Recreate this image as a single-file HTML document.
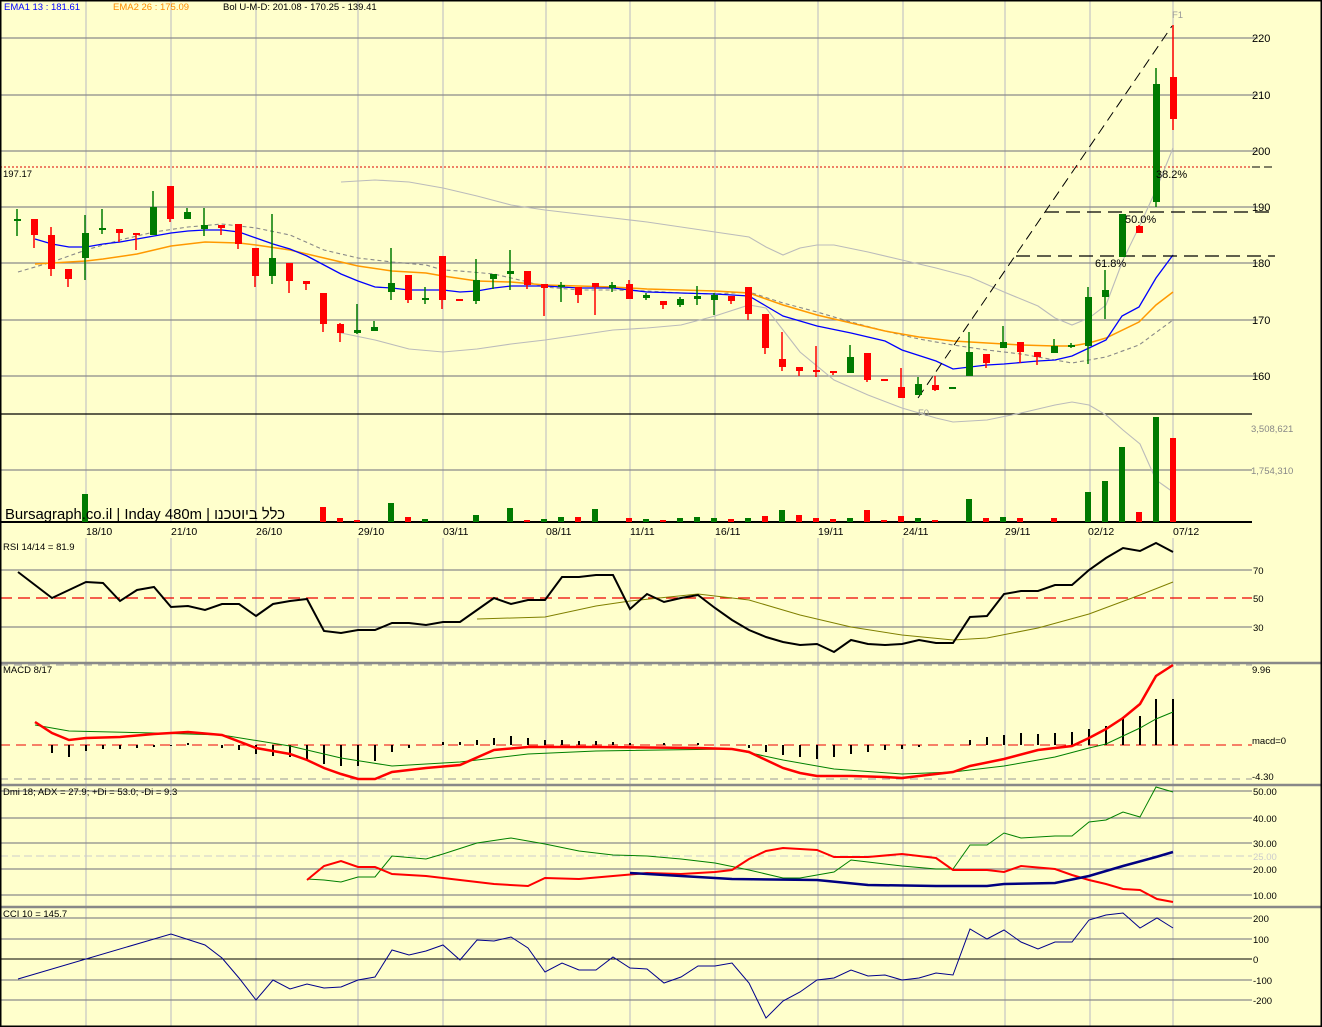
<!DOCTYPE html>
<html><head><meta charset="utf-8"><style>
html,body{margin:0;padding:0;background:#ffffcc;}
svg{display:block;font-family:"Liberation Sans","Noto Sans CJK JP",sans-serif;}
</style></head><body>
<svg width="1322" height="1027" viewBox="0 0 1322 1027" xmlns="http://www.w3.org/2000/svg">
<rect x="0" y="0" width="1322" height="1027" fill="#ffffcc"/>
<!-- vertical grid -->
<g stroke="#c4c4c4" stroke-width="1.2">
<line x1="86" y1="0" x2="86" y2="1027"/><line x1="171" y1="0" x2="171" y2="1027"/><line x1="256" y1="0" x2="256" y2="1027"/><line x1="358" y1="0" x2="358" y2="1027"/><line x1="443" y1="0" x2="443" y2="1027"/><line x1="546" y1="0" x2="546" y2="1027"/><line x1="630" y1="0" x2="630" y2="1027"/><line x1="715" y1="0" x2="715" y2="1027"/><line x1="818" y1="0" x2="818" y2="1027"/><line x1="903" y1="0" x2="903" y2="1027"/><line x1="1005" y1="0" x2="1005" y2="1027"/><line x1="1090" y1="0" x2="1090" y2="1027"/><line x1="1173" y1="0" x2="1173" y2="1027"/>
</g>
<!-- horizontal grid -->
<g stroke="#8a8a8a" stroke-width="1.2">
<line x1="0" y1="38" x2="1258" y2="38"/><line x1="0" y1="95" x2="1258" y2="95"/><line x1="0" y1="151" x2="1258" y2="151"/><line x1="0" y1="207" x2="1258" y2="207"/><line x1="0" y1="263" x2="1258" y2="263"/><line x1="0" y1="320" x2="1258" y2="320"/><line x1="0" y1="376" x2="1258" y2="376"/>
<line x1="0" y1="470" x2="1252" y2="470"/>
<line x1="0" y1="570" x2="1252" y2="570"/><line x1="0" y1="627" x2="1252" y2="627"/>
<line x1="0" y1="791" x2="1252" y2="791"/><line x1="0" y1="818" x2="1252" y2="818"/><line x1="0" y1="843" x2="1252" y2="843"/><line x1="0" y1="869" x2="1252" y2="869"/><line x1="0" y1="895" x2="1252" y2="895"/>
<line x1="0" y1="918" x2="1252" y2="918"/><line x1="0" y1="939" x2="1252" y2="939"/><line x1="0" y1="980" x2="1252" y2="980"/><line x1="0" y1="1000" x2="1252" y2="1000"/>
</g>
<line x1="0" y1="856" x2="1252" y2="856" stroke="#ccc" stroke-dasharray="8,4"/>
<line x1="0" y1="959" x2="1252" y2="959" stroke="#000" stroke-width="1"/>
<!-- panel separators -->
<line x1="0" y1="414" x2="1252" y2="414" stroke="#000" stroke-width="1.3"/>
<line x1="0" y1="522" x2="1252" y2="522" stroke="#000" stroke-width="2"/>
<rect x="0" y="523" width="1322" height="15" fill="#ffffcc"/>
<line x1="0" y1="663" x2="1322" y2="663" stroke="#888" stroke-width="2.5"/>
<line x1="0" y1="785" x2="1322" y2="785" stroke="#888" stroke-width="2.5"/>
<line x1="0" y1="907" x2="1322" y2="907" stroke="#888" stroke-width="2.5"/>
<line x1="0" y1="665" x2="1252" y2="665" stroke="#999" stroke-dasharray="8,6"/>
<line x1="0" y1="779" x2="1252" y2="779" stroke="#999" stroke-dasharray="8,6"/>
<line x1="0" y1="745" x2="1252" y2="745" stroke="#e00" stroke-dasharray="10,6"/>
<line x1="0" y1="598" x2="1252" y2="598" stroke="#e00" stroke-width="1.3" stroke-dasharray="12,6"/>
<line x1="0" y1="167" x2="1252" y2="167" stroke="#d00" stroke-dasharray="2,2"/>
<line x1="1252" y1="167" x2="1275" y2="167" stroke="#000" stroke-dasharray="8,4"/>
<!-- bollinger -->
<g fill="none" stroke-width="1.1">
<polyline stroke="#bbb" points="341,182 375,180 409,182 443,188 477,196 511,205 545,210 579,214 613,218 647,222 681,227 715,232 749,237 766,247 783,255 800,248 817,245 834,245 868,252 902,260 936,268 970,277 1004,292 1038,306 1055,318 1072,325 1089,318 1106,305 1123,260 1140,225 1156,190 1173,148"/>
<polyline stroke="#bbb" points="341,333 375,340 409,349 443,352 477,349 511,344 545,340 579,335 613,330 647,328 681,325 715,316 749,305 766,308 783,330 800,352 834,380 868,395 902,408 936,418 953,422 987,420 1021,413 1055,405 1072,402 1089,405 1106,415 1123,430 1140,444 1156,480 1173,492"/>
<polyline stroke="#888" stroke-dasharray="4,3" points="18,272 52,262 86,250 120,240 154,232 188,227 222,224 256,228 290,235 324,250 358,258 392,262 426,265 443,270 460,271 494,274 528,282 545,287 579,290 613,290 647,291 681,293 715,294 749,292 783,303 817,312 851,322 885,331 919,339 953,345 987,350 1021,354 1055,360 1072,363 1106,357 1139,345 1173,320"/>
<polyline stroke="#f90" stroke-width="1.5" points="35,264 69,262 86,261 103,259 137,254 171,246 205,242 239,243 256,245 290,250 324,258 358,266 392,271 426,273 443,276 477,281 511,282 545,285 579,286 613,287 647,289 681,290 715,291 749,293 783,305 817,315 851,323 885,331 919,337 953,341 987,343 1021,345 1055,346 1072,346 1089,343 1106,338 1139,322 1156,305 1173,292"/>
<polyline stroke="#00f" stroke-width="1.3" points="35,239 52,244 69,247 86,247 103,244 120,242 137,239 154,236 171,233 188,231 205,230 222,230 239,232 256,238 273,244 290,249 307,256 324,265 341,274 358,281 375,287 392,288 409,290 426,290 443,290 460,292 477,291 494,288 511,286 528,286 545,286 579,288 613,288 647,292 681,293 715,294 749,296 766,306 783,316 800,321 817,326 851,333 885,341 902,350 936,361 953,369 987,365 1004,364 1038,361 1055,360 1072,356 1089,348 1106,340 1122,316 1139,307 1156,278 1173,255"/>
</g>
<!-- fib -->
<line x1="918" y1="398" x2="1172" y2="26" stroke="#000" stroke-dasharray="10,6"/>
<line x1="1045" y1="212" x2="1275" y2="212" stroke="#000" stroke-width="1.3" stroke-dasharray="14,7"/>
<line x1="1016" y1="256" x2="1275" y2="256" stroke="#000" stroke-width="1.3" stroke-dasharray="14,7"/>
<!-- candles: wicks -->
<g stroke-width="1.5">
<g stroke="#007a00">
<line x1="17" y1="209" x2="17" y2="236"/><line x1="85" y1="215" x2="85" y2="280"/><line x1="102" y1="209" x2="102" y2="234"/><line x1="153" y1="191" x2="153" y2="235"/><line x1="187" y1="208" x2="187" y2="219"/><line x1="204" y1="208" x2="204" y2="236"/><line x1="272" y1="214" x2="272" y2="284"/><line x1="357" y1="304" x2="357" y2="334"/><line x1="374" y1="321" x2="374" y2="331"/><line x1="391" y1="248" x2="391" y2="300"/><line x1="425" y1="287" x2="425" y2="304"/><line x1="476" y1="259" x2="476" y2="304"/><line x1="493" y1="274" x2="493" y2="289"/><line x1="510" y1="250" x2="510" y2="290"/><line x1="561" y1="282" x2="561" y2="302"/><line x1="612" y1="282" x2="612" y2="292"/><line x1="646" y1="293" x2="646" y2="300"/><line x1="680" y1="297" x2="680" y2="307"/><line x1="697" y1="286" x2="697" y2="305"/><line x1="714" y1="293" x2="714" y2="315"/><line x1="850" y1="345" x2="850" y2="373"/><line x1="918" y1="377" x2="918" y2="395"/><line x1="969" y1="332" x2="969" y2="376"/><line x1="1003" y1="326" x2="1003" y2="348"/><line x1="1054" y1="339" x2="1054" y2="353"/><line x1="1071" y1="343" x2="1071" y2="348"/><line x1="1088" y1="287" x2="1088" y2="364"/><line x1="1105" y1="270" x2="1105" y2="319"/><line x1="1156" y1="68" x2="1156" y2="207"/>
</g>
<g stroke="#f00">
<line x1="34" y1="219" x2="34" y2="248"/><line x1="51" y1="227" x2="51" y2="276"/><line x1="68" y1="269" x2="68" y2="287"/><line x1="119" y1="229" x2="119" y2="242"/><line x1="136" y1="233" x2="136" y2="250"/><line x1="170" y1="186" x2="170" y2="222"/><line x1="221" y1="225" x2="221" y2="235"/><line x1="238" y1="224" x2="238" y2="249"/><line x1="255" y1="248" x2="255" y2="287"/><line x1="289" y1="263" x2="289" y2="293"/><line x1="306" y1="281" x2="306" y2="290"/><line x1="323" y1="293" x2="323" y2="332"/><line x1="340" y1="323" x2="340" y2="342"/><line x1="408" y1="275" x2="408" y2="303"/><line x1="442" y1="256" x2="442" y2="309"/><line x1="527" y1="271" x2="527" y2="289"/><line x1="544" y1="284" x2="544" y2="316"/><line x1="578" y1="287" x2="578" y2="303"/><line x1="595" y1="283" x2="595" y2="315"/><line x1="629" y1="280" x2="629" y2="299"/><line x1="663" y1="301" x2="663" y2="309"/><line x1="731" y1="296" x2="731" y2="304"/><line x1="748" y1="287" x2="748" y2="320"/><line x1="765" y1="314" x2="765" y2="354"/><line x1="782" y1="332" x2="782" y2="371"/><line x1="799" y1="367" x2="799" y2="376"/><line x1="816" y1="346" x2="816" y2="377"/><line x1="833" y1="371" x2="833" y2="375"/><line x1="867" y1="353" x2="867" y2="382"/><line x1="901" y1="368" x2="901" y2="398"/><line x1="935" y1="376" x2="935" y2="391"/><line x1="986" y1="354" x2="986" y2="368"/><line x1="1020" y1="342" x2="1020" y2="363"/><line x1="1037" y1="352" x2="1037" y2="365"/><line x1="1139" y1="225" x2="1139" y2="233"/><line x1="1173" y1="25" x2="1173" y2="130"/>
</g>
</g>
<!-- candle bodies -->
<g fill="#007a00">
<rect x="14" y="219" width="7" height="2"/><rect x="82" y="233" width="7" height="25"/><rect x="99" y="228" width="7" height="2"/><rect x="150" y="207" width="7" height="28"/><rect x="184" y="212" width="7" height="7"/><rect x="201" y="225" width="7" height="4"/><rect x="269" y="258" width="7" height="18"/><rect x="354" y="330" width="7" height="3"/><rect x="371" y="327" width="7" height="4"/><rect x="388" y="283" width="7" height="9"/><rect x="422" y="298" width="7" height="2"/><rect x="473" y="280" width="7" height="21"/><rect x="490" y="274" width="7" height="5"/><rect x="507" y="271" width="7" height="3"/><rect x="558" y="285" width="7" height="2"/><rect x="609" y="285" width="7" height="3"/><rect x="643" y="295" width="7" height="3"/><rect x="677" y="299" width="7" height="6"/><rect x="694" y="296" width="7" height="3"/><rect x="711" y="295" width="7" height="5"/><rect x="847" y="357" width="7" height="16"/><rect x="915" y="384" width="7" height="11"/><rect x="949" y="387" width="7" height="2"/><rect x="966" y="352" width="7" height="24"/><rect x="1000" y="342" width="7" height="6"/><rect x="1051" y="346" width="7" height="7"/><rect x="1068" y="345" width="7" height="2"/><rect x="1085" y="297" width="7" height="49"/><rect x="1102" y="290" width="7" height="7"/><rect x="1119" y="214" width="7" height="43"/><rect x="1153" y="84" width="7" height="118"/>
</g>
<g fill="#f00">
<rect x="31" y="219" width="7" height="16"/><rect x="48" y="235" width="7" height="34"/><rect x="65" y="269" width="7" height="10"/><rect x="116" y="229" width="7" height="4"/><rect x="133" y="233" width="7" height="2"/><rect x="167" y="186" width="7" height="33"/><rect x="218" y="225" width="7" height="3"/><rect x="235" y="224" width="7" height="20"/><rect x="252" y="248" width="7" height="28"/><rect x="286" y="263" width="7" height="18"/><rect x="303" y="281" width="7" height="3"/><rect x="320" y="293" width="7" height="31"/><rect x="337" y="324" width="7" height="9"/><rect x="405" y="275" width="7" height="25"/><rect x="439" y="256" width="7" height="44"/><rect x="456" y="299" width="7" height="2"/><rect x="524" y="271" width="7" height="14"/><rect x="541" y="284" width="7" height="4"/><rect x="575" y="287" width="7" height="8"/><rect x="592" y="283" width="7" height="4"/><rect x="626" y="284" width="7" height="15"/><rect x="660" y="301" width="7" height="4"/><rect x="728" y="296" width="7" height="5"/><rect x="745" y="287" width="7" height="27"/><rect x="762" y="314" width="7" height="34"/><rect x="779" y="359" width="7" height="8"/><rect x="796" y="367" width="7" height="4"/><rect x="813" y="370" width="7" height="2"/><rect x="830" y="371" width="7" height="2"/><rect x="864" y="353" width="7" height="27"/><rect x="881" y="379" width="7" height="2"/><rect x="898" y="387" width="7" height="11"/><rect x="932" y="385" width="7" height="5"/><rect x="983" y="354" width="7" height="9"/><rect x="1017" y="342" width="7" height="10"/><rect x="1034" y="352" width="7" height="5"/><rect x="1136" y="226" width="7" height="7"/><rect x="1170" y="77" width="7" height="42"/>
</g>
<!-- volume -->
<g fill="#007a00">
<rect x="82" y="494" width="6" height="28"/><rect x="388" y="503" width="6" height="19"/><rect x="422" y="519" width="6" height="3"/><rect x="473" y="515" width="6" height="7"/><rect x="507" y="508" width="6" height="14"/><rect x="541" y="519" width="6" height="3"/><rect x="558" y="517" width="6" height="5"/><rect x="592" y="509" width="6" height="13"/><rect x="643" y="519" width="6" height="3"/><rect x="677" y="518" width="6" height="4"/><rect x="694" y="517" width="6" height="5"/><rect x="711" y="518" width="6" height="4"/><rect x="745" y="518" width="6" height="4"/><rect x="779" y="510" width="6" height="12"/><rect x="847" y="518" width="6" height="4"/><rect x="915" y="518" width="6" height="4"/><rect x="966" y="499" width="6" height="23"/><rect x="1000" y="517" width="6" height="5"/><rect x="1085" y="492" width="6" height="30"/><rect x="1102" y="481" width="6" height="41"/><rect x="1119" y="447" width="6" height="75"/><rect x="1153" y="417" width="6" height="105"/>
</g>
<g fill="#f00">
<rect x="320" y="507" width="6" height="15"/><rect x="337" y="518" width="6" height="4"/><rect x="354" y="520" width="6" height="2"/><rect x="405" y="517" width="6" height="5"/><rect x="524" y="520" width="6" height="2"/><rect x="575" y="517" width="6" height="5"/><rect x="626" y="518" width="6" height="4"/><rect x="660" y="520" width="6" height="2"/><rect x="728" y="519" width="6" height="3"/><rect x="762" y="516" width="6" height="6"/><rect x="796" y="515" width="6" height="7"/><rect x="813" y="518" width="6" height="4"/><rect x="830" y="519" width="6" height="3"/><rect x="864" y="510" width="6" height="12"/><rect x="881" y="520" width="6" height="2"/><rect x="898" y="516" width="6" height="6"/><rect x="932" y="520" width="6" height="2"/><rect x="983" y="518" width="6" height="4"/><rect x="1017" y="518" width="6" height="4"/><rect x="1051" y="518" width="6" height="4"/><rect x="1136" y="512" width="6" height="10"/><rect x="1170" y="438" width="6" height="84"/>
</g>
<!-- RSI -->
<polyline fill="none" stroke="#808000" stroke-width="1" points="477,619 545,617 596,606 630,601 698,594 749,600 800,615 851,627 902,635 953,640 987,638 1038,628 1089,614 1140,595 1173,582"/>
<polyline fill="none" stroke="#000" stroke-width="2" points="18,572 35,585 52,598 69,590 86,582 103,583 120,601 137,590 154,587 171,607 188,606 205,610 222,604 239,604 256,616 273,604 290,601 307,599 324,631 341,633 358,630 375,630 392,623 409,623 426,625 443,622 460,622 477,610 494,598 511,604 528,600 545,600 562,577 579,577 596,575 613,575 630,609 647,594 664,602 681,598 698,595 715,608 732,620 749,630 766,637 783,642 800,645 817,644 834,652 851,640 868,644 885,645 902,644 919,640 936,643 953,643 970,617 987,616 1004,594 1021,591 1038,591 1055,585 1072,585 1089,570 1106,558 1123,548 1140,551 1156,543 1173,552"/>
<!-- MACD histogram -->
<g stroke="#000" stroke-width="2">
<line x1="52" y1="745" x2="52" y2="753"/><line x1="69" y1="745" x2="69" y2="757"/><line x1="86" y1="745" x2="86" y2="751"/><line x1="103" y1="745" x2="103" y2="749"/><line x1="120" y1="745" x2="120" y2="749"/><line x1="137" y1="745" x2="137" y2="748"/><line x1="154" y1="745" x2="154" y2="747"/><line x1="171" y1="745" x2="171" y2="746"/><line x1="188" y1="745" x2="188" y2="743"/><line x1="222" y1="745" x2="222" y2="748"/><line x1="239" y1="745" x2="239" y2="750"/><line x1="256" y1="745" x2="256" y2="754"/><line x1="273" y1="745" x2="273" y2="756"/><line x1="290" y1="745" x2="290" y2="757"/><line x1="307" y1="745" x2="307" y2="760"/><line x1="324" y1="745" x2="324" y2="764"/><line x1="341" y1="745" x2="341" y2="766"/><line x1="358" y1="745" x2="358" y2="766"/><line x1="375" y1="745" x2="375" y2="761"/><line x1="392" y1="745" x2="392" y2="752"/><line x1="409" y1="745" x2="409" y2="748"/><line x1="443" y1="745" x2="443" y2="742"/><line x1="460" y1="745" x2="460" y2="742"/><line x1="477" y1="745" x2="477" y2="740"/><line x1="494" y1="745" x2="494" y2="738"/><line x1="511" y1="745" x2="511" y2="736"/><line x1="528" y1="745" x2="528" y2="738"/><line x1="545" y1="745" x2="545" y2="740"/><line x1="562" y1="745" x2="562" y2="740"/><line x1="579" y1="745" x2="579" y2="741"/><line x1="596" y1="745" x2="596" y2="741"/><line x1="613" y1="745" x2="613" y2="742"/><line x1="630" y1="745" x2="630" y2="743"/><line x1="664" y1="745" x2="664" y2="743"/><line x1="698" y1="745" x2="698" y2="743"/><line x1="749" y1="745" x2="749" y2="748"/><line x1="766" y1="745" x2="766" y2="752"/><line x1="783" y1="745" x2="783" y2="755"/><line x1="800" y1="745" x2="800" y2="757"/><line x1="817" y1="745" x2="817" y2="759"/><line x1="834" y1="745" x2="834" y2="757"/><line x1="851" y1="745" x2="851" y2="754"/><line x1="868" y1="745" x2="868" y2="752"/><line x1="885" y1="745" x2="885" y2="750"/><line x1="902" y1="745" x2="902" y2="749"/><line x1="919" y1="745" x2="919" y2="747"/><line x1="970" y1="745" x2="970" y2="740"/><line x1="987" y1="745" x2="987" y2="737"/><line x1="1004" y1="745" x2="1004" y2="735"/><line x1="1021" y1="745" x2="1021" y2="733"/><line x1="1038" y1="745" x2="1038" y2="734"/><line x1="1055" y1="745" x2="1055" y2="733"/><line x1="1072" y1="745" x2="1072" y2="732"/><line x1="1089" y1="745" x2="1089" y2="729"/><line x1="1106" y1="745" x2="1106" y2="726"/><line x1="1123" y1="745" x2="1123" y2="717"/><line x1="1140" y1="745" x2="1140" y2="716"/><line x1="1156" y1="745" x2="1156" y2="699"/><line x1="1173" y1="745" x2="1173" y2="699"/>
</g>
<polyline fill="none" stroke="#008000" stroke-width="1" points="35,725 69,731 154,733 222,735 290,746 341,758 392,766 460,762 528,754 596,751 732,749 783,760 834,769 902,774 953,772 1004,766 1055,757 1089,748 1106,744 1123,736 1140,728 1156,719 1173,712"/>
<polyline fill="none" stroke="#f00" stroke-width="2.5" points="35,722 52,733 69,740 86,738 120,737 154,734 188,732 222,735 256,748 290,754 307,760 324,768 341,774 358,779 375,779 392,772 426,768 460,765 494,750 528,747 596,747 698,748 732,749 749,752 766,760 783,768 800,773 817,776 851,776 885,777 902,778 936,774 953,772 970,766 1004,759 1038,750 1072,746 1089,738 1106,729 1123,718 1140,704 1156,676 1173,665"/>
<!-- DMI -->
<polyline fill="none" stroke="#008000" stroke-width="1" points="307,879 324,880 341,882 358,877 375,877 392,856 426,859 443,854 477,843 511,838 545,844 579,851 613,855 647,856 681,859 715,863 749,870 783,878 800,878 834,872 851,860 868,862 902,866 936,869 953,869 970,845 987,845 1004,833 1021,838 1055,836 1072,836 1089,822 1106,820 1123,812 1140,817 1156,787 1173,792"/>
<polyline fill="none" stroke="#f00" stroke-width="2" points="307,880 324,866 341,861 358,867 375,867 392,874 426,876 460,880 494,884 528,886 545,878 579,879 613,876 647,873 681,874 715,872 732,870 749,859 766,851 783,848 817,850 834,857 868,857 902,854 936,858 953,870 987,870 1004,872 1021,866 1055,869 1072,875 1089,880 1106,884 1123,889 1140,890 1157,899 1173,902"/>
<polyline fill="none" stroke="#000080" stroke-width="2.5" points="630,873 681,876 732,879 817,880 868,885 936,886 987,886 1004,884 1055,883 1089,876 1123,866 1156,857 1173,852"/>
<!-- CCI -->
<polyline fill="none" stroke="#00008b" stroke-width="1" points="18,979 171,934 205,945 222,958 239,978 256,1000 273,980 290,989 307,984 324,988 341,987 358,980 375,977 392,950 409,955 426,951 443,945 460,960 477,940 494,941 511,937 528,948 545,972 562,963 579,970 596,970 613,957 630,968 647,969 664,983 681,977 698,966 715,966 732,963 749,983 766,1018 783,1001 800,992 817,980 834,978 851,970 868,976 885,975 902,980 919,978 936,973 953,975 970,929 987,939 1004,930 1021,942 1038,949 1055,942 1072,942 1089,920 1106,915 1123,913 1140,928 1157,918 1173,928"/>
<!-- borders -->
<rect x="0.75" y="0.75" width="1320.5" height="1025.5" fill="none" stroke="#000" stroke-width="1.5"/>
<!-- text -->
<g font-size="9.5">
<text x="4" y="10" fill="#0000ff">EMA1 13 : 181.61</text>
<text x="113" y="10" fill="#ff8c00">EMA2 26 : 175.09</text>
<text x="223" y="10" fill="#000">Bol U-M-D: 201.08 - 170.25 - 139.41</text>
<text x="3" y="177" fill="#000">197.17</text>
<text x="3" y="550" fill="#000">RSI 14/14 = 81.9</text>
<text x="3" y="673" fill="#000">MACD 8/17</text>
<text x="3" y="795" fill="#000">Dmi 18; ADX = 27.9; +Di = 53.0; -Di = 9.3</text>
<text x="3" y="917" fill="#000">CCI 10 = 145.7</text>
</g>
<g font-size="11" fill="#000">
<text x="1252" y="42">220</text><text x="1252" y="99">210</text><text x="1252" y="155">200</text><text x="1252" y="211">190</text><text x="1252" y="267">180</text><text x="1252" y="324">170</text><text x="1252" y="380">160</text>
<text x="1156" y="178">38.2%</text><text x="1125" y="223">50.0%</text><text x="1095" y="267">61.8%</text>
</g>
<g font-size="9.5" fill="#000">
<text x="1251" y="432" fill="#888">3,508,621</text><text x="1251" y="474" fill="#888">1,754,310</text>
<text x="1253" y="574">70</text><text x="1253" y="602">50</text><text x="1253" y="631">30</text>
<text x="1252" y="673">9.96</text><text x="1252" y="744">macd=0</text><text x="1252" y="780">-4.30</text>
<text x="1253" y="795">50.00</text><text x="1253" y="822">40.00</text><text x="1253" y="847">30.00</text><text x="1253" y="860" fill="#ccc">25.00</text><text x="1253" y="873">20.00</text><text x="1253" y="899">10.00</text>
<text x="1253" y="922">200</text><text x="1253" y="943">100</text><text x="1253" y="963">0</text><text x="1253" y="984">-100</text><text x="1253" y="1004">-200</text>
</g>
<g font-size="9.5" fill="#999"><text x="1172" y="18">F1</text><text x="918" y="416">F0</text></g>
<g font-size="10.5" fill="#000">
<text x="86" y="535">18/10</text><text x="171" y="535">21/10</text><text x="256" y="535">26/10</text><text x="358" y="535">29/10</text><text x="443" y="535">03/11</text><text x="546" y="535">08/11</text><text x="630" y="535">11/11</text><text x="715" y="535">16/11</text><text x="818" y="535">19/11</text><text x="903" y="535">24/11</text><text x="1005" y="535">29/11</text><text x="1088" y="535">02/12</text><text x="1173" y="535">07/12</text>
</g>
<text x="5" y="519" font-size="15" textLength="280" lengthAdjust="spacingAndGlyphs" fill="#000">Bursagraph.co.il | Inday 480m | כלל ביוטכנו</text>
</svg>
</body></html>
